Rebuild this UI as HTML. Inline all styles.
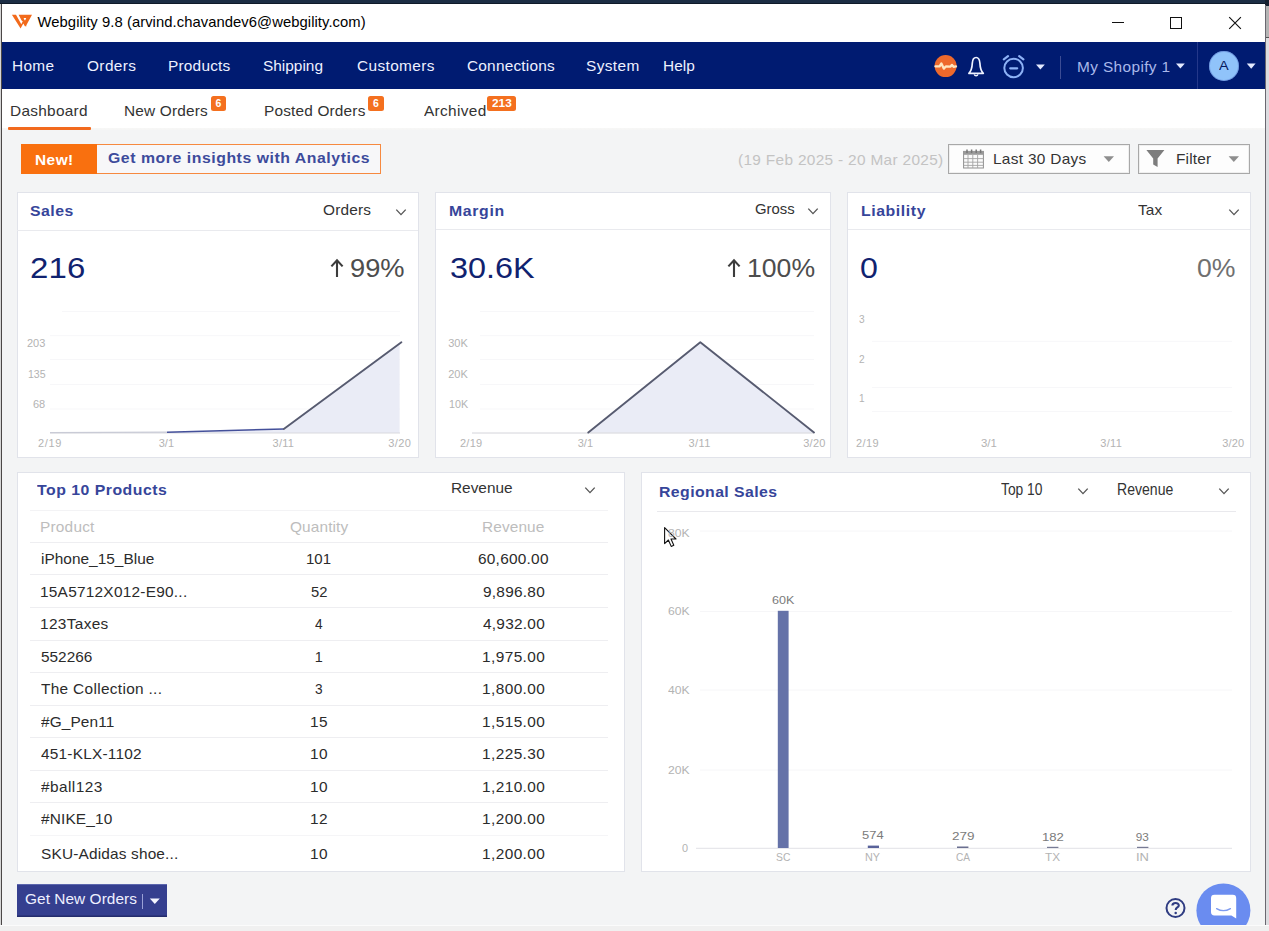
<!DOCTYPE html>
<html lang="en">
<head>
<meta charset="utf-8">
<title>Webgility 9.8</title>
<style>
html,body{margin:0;padding:0;}
body{width:1269px;height:931px;overflow:hidden;background:#f3f4f5;font-family:"Liberation Sans",sans-serif;}
#app{position:relative;width:1269px;height:931px;overflow:hidden;background:#f3f4f5;}
#app div,#app svg{position:absolute;}
.t{white-space:nowrap;margin:0;padding:0;}
.card{background:#fff;border:1px solid #e1e3ea;box-sizing:border-box;}
.hl{height:1px;background:#eeeef1;}
.badge{background:#f4701f;border-radius:2.5px;}
.btn{background:#fdfdfd;border:1.3px solid #a8a8a8;box-sizing:border-box;box-shadow:inset 0 0 0 1px #efefef;}
</style>
</head>
<body>
<div id="app">

<!-- ===== desktop frame behind the window ===== -->
<div style="left:0;top:0;width:1269px;height:3px;background:#1c2d44;"></div>
<div style="left:0;top:3px;width:1269px;height:1px;background:#0f1a28;"></div>
<div style="left:0;top:4px;width:1px;height:921px;background:#d6d6d6;"></div>
<div style="left:1px;top:4px;width:1px;height:921px;background:#4b4747;"></div>
<div style="left:1265px;top:0;width:4px;height:6px;background:#15202f;"></div>
<div style="left:1265px;top:5px;width:1px;height:920px;background:#6a6870;"></div>
<div style="left:1266px;top:6px;width:3px;height:31px;background:#b4b4b4;"></div>
<div style="left:1266px;top:37px;width:3px;height:1px;background:#555;"></div>
<div style="left:1266px;top:38px;width:3px;height:887px;background:#dcdce0;"></div>
<div style="left:0;top:925px;width:1269px;height:1px;background:#fbfbfb;"></div>
<div style="left:0;top:926px;width:1269px;height:5px;background:#f0f0f0;"></div>

<!-- ===== title bar ===== -->
<div style="left:2px;top:4px;width:1263px;height:38px;background:#fff;"></div>
<svg style="left:10px;top:12px;" width="24" height="20" viewBox="10 12 24 20">
  <path d="M11.9 14.7 L16 14.7 L21.3 24.2 L23.3 20.2 L26.6 26.3 L24.9 26.3 L23.3 23.4 L20.6 28.6 Z" fill="#f26a1b"/>
  <path d="M18.6 14.7 L32 14.7 L25.8 26.3 L23.4 21.8 L21.6 20.4 Z" fill="#f26a1b"/>
  <path d="M23.6 18 L26.2 18 L25.3 20.2 L24.5 20.2 Z" fill="#fff"/>
</svg>
<div style="left:1112px;top:22px;width:12px;height:1px;background:#111;"></div>
<div style="left:1170px;top:17px;width:12px;height:12px;box-sizing:border-box;border:1px solid #111;"></div>
<svg style="left:1228px;top:16px;" width="14" height="14" viewBox="0 0 14 14"><path d="M1.2 1.2 L12.9 12.9 M12.9 1.2 L1.2 12.9" stroke="#111" stroke-width="1.15" fill="none"/></svg>

<!-- ===== nav bar ===== -->
<div style="left:2px;top:42px;width:1263px;height:47px;background:#001b71;"></div>
<!-- orange pulse icon -->
<svg style="left:933px;top:54px;" width="25" height="25" viewBox="933 54 25 25">
  <circle cx="945.6" cy="66.1" r="11" fill="#ee692c"/>
  <path d="M935.4 66.3 L939.6 66.4 L941.4 63.4 L943.8 68.6 L945.8 66.5 L950.4 66.6 L952 64.9 L953.6 66.8 L956 66.4" stroke="#ffe6c0" stroke-width="2.3" fill="none" stroke-linejoin="round" stroke-linecap="round"/>
</svg>
<!-- bell -->
<svg style="left:965px;top:54px;" width="24" height="26" viewBox="965 54 24 26">
  <path d="M976.1 57.5 C973.3 57.5 972.5 60.2 972.3 63.2 C972.1 67.6 971.5 70.6 968.9 73.3 L983.3 73.3 C980.7 70.6 980.1 67.6 979.9 63.2 C979.7 60.2 978.9 57.5 976.1 57.5 Z" stroke="#eef2ff" stroke-width="1.7" fill="none" stroke-linejoin="round"/>
  <path d="M974.3 74.4 C974.8 76.3 977.4 76.3 977.9 74.4" stroke="#eef2ff" stroke-width="1.5" fill="none"/>
</svg>
<!-- alarm clock -->
<svg style="left:1000px;top:53px;" width="28" height="28" viewBox="1000 53 28 28">
  <circle cx="1013.6" cy="68" r="9.3" stroke="#8db2f6" stroke-width="2" fill="none"/>
  <path d="M1003.8 59.4 L1008 56.2 M1023.4 59.4 L1019.2 56.2" stroke="#8db2f6" stroke-width="2.2" stroke-linecap="round"/>
  <path d="M1010.2 68.3 L1017.2 68.3" stroke="#8db2f6" stroke-width="2.2" stroke-linecap="round"/>
</svg>
<svg style="left:1035px;top:63px;" width="11" height="8" viewBox="0 0 11 8"><path d="M1 1.4 L9.8 1.4 L5.4 6.6 Z" fill="#e4eaff"/></svg>
<div style="left:1060px;top:56px;width:1px;height:23px;background:#3c4c94;"></div>
<svg style="left:1175px;top:62px;" width="11" height="8" viewBox="0 0 11 8"><path d="M1 1.4 L9.8 1.4 L5.4 6.6 Z" fill="#e4eaff"/></svg>
<div style="left:1197px;top:42px;width:1px;height:47px;background:#24388a;"></div>
<div style="left:1208.5px;top:50.6px;width:30.5px;height:30.5px;border-radius:50%;background:#90c3fa;box-shadow:inset 0 0 0 1px rgba(80,110,200,.45);"></div>
<svg style="left:1246px;top:62px;" width="11" height="8" viewBox="0 0 11 8"><path d="M0.8 1.4 L9.6 1.4 L5.2 6.8 Z" fill="#e4eaff"/></svg>

<!-- ===== tab bar ===== -->
<div style="left:2px;top:89px;width:1263px;height:41px;background:linear-gradient(#fff 0,#fff 38.6px,#f7f7f6 39.4px,#f5f5f5 41px);"></div>
<div style="left:8px;top:127px;width:82.5px;height:3px;background:#f26a1e;border-radius:1px;"></div>
<div class="badge" style="left:211px;top:96px;width:15px;height:14.5px;"></div>
<div class="badge" style="left:368.3px;top:96px;width:15.4px;height:14.5px;"></div>
<div class="badge" style="left:486.5px;top:96px;width:29.8px;height:14.8px;"></div>

<!-- ===== toolbar ===== -->
<div style="left:20.75px;top:143.75px;width:360.5px;height:30.5px;box-sizing:border-box;border:1.4px solid #f6893f;background:#f7f7f9;"></div>
<div style="left:20.75px;top:143.75px;width:76px;height:30.5px;background:#f9700f;"></div>

<div class="btn" style="left:947.6px;top:143.5px;width:182.3px;height:30.6px;"></div>
<div class="btn" style="left:1137.6px;top:143.5px;width:112.6px;height:30.6px;"></div>
<!-- calendar icon -->
<svg style="left:962px;top:148px;" width="24" height="22" viewBox="962 148 24 22">
  <rect x="963.6" y="151.4" width="19.8" height="16.6" fill="#fbfbfb" stroke="#8f8f8f" stroke-width="1"/>
  <rect x="963.6" y="151.4" width="19.8" height="3.4" fill="#9a9a9a"/>
  <path d="M967 149.4 V153 M971.6 149.4 V153 M976.2 149.4 V153 M980.6 149.4 V153" stroke="#777" stroke-width="1.5"/>
  <path d="M963.6 158.6 H983.4 M963.6 162.2 H983.4 M963.6 165.4 H983.4 M968 155 V168 M972.8 155 V168 M977.6 155 V168" stroke="#a4a4a4" stroke-width="0.9"/>
</svg>
<svg style="left:1103px;top:155px;" width="12" height="8" viewBox="0 0 12 8"><path d="M0.6 1.2 L11 1.2 L5.8 7 Z" fill="#8e8e8e"/></svg>
<!-- funnel -->
<svg style="left:1145px;top:149px;" width="21" height="20" viewBox="1145 149 21 20">
  <path d="M1146.4 150 L1164.4 150 L1157.6 158.6 L1157.6 167 L1153.2 164.4 L1153.2 158.6 Z" fill="#7d7d7d"/>
</svg>
<svg style="left:1227.5px;top:155px;" width="12" height="8" viewBox="0 0 12 8"><path d="M0.6 1.2 L11 1.2 L5.8 7 Z" fill="#8e8e8e"/></svg>

<!-- ===== KPI cards ===== -->
<div class="card" style="left:16.5px;top:192px;width:402.3px;height:265.6px;"></div>
<div class="card" style="left:435.4px;top:192px;width:395.4px;height:265.6px;"></div>
<div class="card" style="left:847.4px;top:192px;width:403.2px;height:265.6px;"></div>
<div class="hl" style="left:17px;top:230px;width:401px;background:#e9eaee;"></div>
<div class="hl" style="left:436px;top:229px;width:394px;background:#e9eaee;"></div>
<div class="hl" style="left:848px;top:229px;width:402px;background:#e9eaee;"></div>

<!-- chevrons -->
<svg style="left:395px;top:208px;" width="12" height="9" viewBox="0 0 12 9"><path d="M1.3 1.6 L6 6.6 L10.7 1.6" stroke="#555" stroke-width="1.35" fill="none"/></svg>
<svg style="left:806.5px;top:207px;" width="12" height="9" viewBox="0 0 12 9"><path d="M1.3 1.6 L6 6.6 L10.7 1.6" stroke="#555" stroke-width="1.35" fill="none"/></svg>
<svg style="left:1227.8px;top:208px;" width="12" height="9" viewBox="0 0 12 9"><path d="M1.3 1.6 L6 6.6 L10.7 1.6" stroke="#555" stroke-width="1.35" fill="none"/></svg>

<!-- trend arrows -->
<svg style="left:329px;top:258px;" width="16" height="21" viewBox="329 258 16 21"><path d="M337 277 V260.4 M331.4 266.4 L337 260.2 L342.6 266.4" stroke="#3c3c3c" stroke-width="2.1" fill="none"/></svg>
<svg style="left:725.5px;top:258px;" width="16" height="21" viewBox="329 258 16 21"><path d="M337 277 V260.4 M331.4 266.4 L337 260.2 L342.6 266.4" stroke="#3c3c3c" stroke-width="2.1" fill="none"/></svg>

<!-- KPI charts -->
<svg style="left:0;top:300px;" width="1269" height="140" viewBox="0 300 1269 140">
  <g stroke="#f7f7f9" stroke-width="1">
    <path d="M62 311.5 H400 M50 335.7 H400 M50 359.5 H400 M50 384.5 H400 M50 409 H400"/>
    <path d="M480 311.5 H814 M480 335.7 H814 M480 359.5 H814 M480 384.5 H814 M480 409 H814"/>
    <path d="M872 341.3 H1232 M872 387.5 H1232 M872 411.5 H1232"/>
  </g>
  <!-- sales -->
  <path d="M50 432.6 L167 432.2 L283.8 429 L399.6 343.6 L399.6 433 L50 433 Z" fill="#eaecf6"/>
  <path d="M50 433 H400" stroke="#d9d9de" stroke-width="1"/>
  <path d="M50 432.6 L167 432.2" stroke="#c9cbd6" stroke-width="1.2" fill="none"/>
  <path d="M167 432.2 L283.8 429" stroke="#44509a" stroke-width="1.4" fill="none"/>
  <path d="M283.8 429 L401.4 342.2" stroke="#575b70" stroke-width="1.9" fill="none" stroke-linecap="round"/>
  <!-- margin -->
  <path d="M588.3 432.8 L700.3 342.2 L814 432.8 Z" fill="#eaecf6"/>
  <path d="M472 433 H814" stroke="#d4d4da" stroke-width="1"/>
  <path d="M588.3 432.6 L700.3 342.2 L814 432.4" stroke="#575b70" stroke-width="1.9" fill="none" stroke-linejoin="round" stroke-linecap="round"/>
</svg>

<!-- ===== Top 10 Products ===== -->
<div class="card" style="left:16.5px;top:472px;width:608.8px;height:400.4px;"></div>
<div class="hl" style="left:30px;top:509.5px;width:577.5px;background:#f3f3f5;"></div>
<div class="hl" style="left:30px;top:542px;width:577.5px;"></div>
<div class="hl" style="left:30px;top:574.3px;width:577.5px;"></div>
<div class="hl" style="left:30px;top:607px;width:577.5px;"></div>
<div class="hl" style="left:30px;top:639.5px;width:577.5px;"></div>
<div class="hl" style="left:30px;top:672px;width:577.5px;"></div>
<div class="hl" style="left:30px;top:704.5px;width:577.5px;"></div>
<div class="hl" style="left:30px;top:737px;width:577.5px;"></div>
<div class="hl" style="left:30px;top:769.5px;width:577.5px;"></div>
<div class="hl" style="left:30px;top:802px;width:577.5px;"></div>
<div class="hl" style="left:30px;top:834.5px;width:577.5px;background:#f5f5f7;"></div>
<svg style="left:583.8px;top:486.2px;" width="12" height="9" viewBox="0 0 12 9"><path d="M1.3 1.6 L6 6.6 L10.7 1.6" stroke="#555" stroke-width="1.35" fill="none"/></svg>

<!-- ===== Regional Sales ===== -->
<div class="card" style="left:641.4px;top:472px;width:609.2px;height:400.4px;"></div>
<div class="hl" style="left:656.5px;top:511px;width:579.5px;background:#e9e9ed;"></div>
<svg style="left:1076.6px;top:487px;" width="12" height="9" viewBox="0 0 12 9"><path d="M1.3 1.6 L6 6.6 L10.7 1.6" stroke="#555" stroke-width="1.35" fill="none"/></svg>
<svg style="left:1218.2px;top:487px;" width="12" height="9" viewBox="0 0 12 9"><path d="M1.3 1.6 L6 6.6 L10.7 1.6" stroke="#555" stroke-width="1.35" fill="none"/></svg>
<svg style="left:640px;top:520px;" width="612" height="340" viewBox="640 520 612 340">
  <path d="M700 531 H1232 M700 611.5 H1232 M700 690 H1232 M700 770 H1232" stroke="#f6f6f8" stroke-width="1"/>
  <path d="M696 848.3 H1232" stroke="#e2e2e6" stroke-width="1"/>
  <rect x="777.8" y="610.8" width="10.8" height="237.2" fill="#6572a8"/>
  <rect x="867.8" y="845.6" width="11.2" height="2.4" fill="#59629a"/>
  <rect x="957" y="846.5" width="11.4" height="1.5" fill="#6a6f90"/>
  <rect x="1047" y="846.8" width="11.4" height="1.2" fill="#777b95"/>
  <rect x="1137" y="846.8" width="11.4" height="1.2" fill="#777b95"/>
</svg>
<!-- mouse cursor -->
<svg style="left:663px;top:526px;" width="16" height="24" viewBox="0 0 16 24">
  <path d="M1.6 1.6 L1.6 17.6 L5.4 14 L8.2 20.4 L10.8 19.2 L8 13 L13 13 Z" fill="#fff" stroke="#111" stroke-width="1.1" stroke-linejoin="round"/>
</svg>

<!-- ===== footer ===== -->
<div style="left:17px;top:883.5px;width:149.8px;height:33px;background:#353f8f;box-shadow:inset 0 1px 0 #5c66ad, inset 0 -1.5px 0 #242c6c;"></div>
<div style="left:141.5px;top:893.5px;width:1px;height:15.5px;background:#9aa1d6;"></div>
<svg style="left:148.5px;top:896.6px;" width="12" height="8" viewBox="0 0 12 8"><path d="M0.8 1.4 L10.8 1.4 L5.8 7 Z" fill="#f4f5ff"/></svg>

<svg style="left:1163px;top:895px;" width="26" height="26" viewBox="1163 895 26 26">
  <circle cx="1175.5" cy="908" r="9" stroke="#2f3c82" stroke-width="2" fill="#f3f4f5"/>
  <path d="M1172.4 905.6 C1172.4 902.2 1178.8 902.2 1178.8 905.4 C1178.8 907.6 1175.7 907.4 1175.7 910" stroke="#2f3c82" stroke-width="2.1" fill="none"/>
  <circle cx="1175.7" cy="912.9" r="1.25" fill="#2f3c82"/>
</svg>
<svg style="left:1194px;top:882px;" width="60" height="43" viewBox="1194 882 60 43">
  <circle cx="1223.4" cy="910.4" r="27" fill="#6a8cf0"/>
  <path d="M1214.4 894.8 H1232.8 Q1236.2 894.8 1236.2 898.2 V918.4 L1231.4 915.4 H1214.4 Q1211 915.4 1211 912 V898.2 Q1211 894.8 1214.4 894.8 Z" fill="#fff"/>
  <path d="M1216.6 908.6 Q1223.4 912.8 1230.4 908.6" stroke="#7d9af0" stroke-width="1.3" fill="none" stroke-linecap="round"/>
</svg>

<!-- ===== text ===== -->
<div class="t" style="left:37.5px;top:13px;font-size:14.8px;line-height:19px;color:#000;letter-spacing:0.06px;">Webgility 9.8 (arvind.chavandev6@webgility.com)</div>
<div class="t" style="left:12.43px;top:56.75px;font-size:14.4px;line-height:18px;color:#eef1ff;letter-spacing:0.31px;transform:scaleX(1.0700);transform-origin:0 0;">Home</div>
<div class="t" style="left:87.25px;top:56.75px;font-size:14.4px;line-height:18px;color:#eef1ff;letter-spacing:0.36px;transform:scaleX(1.0700);transform-origin:0 0;">Orders</div>
<div class="t" style="left:167.93px;top:56.75px;font-size:14.4px;line-height:18px;color:#eef1ff;letter-spacing:0.2px;transform:scaleX(1.0700);transform-origin:0 0;">Products</div>
<div class="t" style="left:262.5px;top:56.75px;font-size:14.4px;line-height:18px;color:#eef1ff;letter-spacing:0.01px;transform:scaleX(1.0700);transform-origin:0 0;">Shipping</div>
<div class="t" style="left:356.5px;top:56.75px;font-size:14.4px;line-height:18px;color:#eef1ff;letter-spacing:0.35px;transform:scaleX(1.0700);transform-origin:0 0;">Customers</div>
<div class="t" style="left:466.5px;top:56.75px;font-size:14.4px;line-height:18px;color:#eef1ff;letter-spacing:0.2px;transform:scaleX(1.0700);transform-origin:0 0;">Connections</div>
<div class="t" style="left:586.25px;top:56.75px;font-size:14.4px;line-height:18px;color:#eef1ff;letter-spacing:0.36px;transform:scaleX(1.0700);transform-origin:0 0;">System</div>
<div class="t" style="left:662.93px;top:56.75px;font-size:14.4px;line-height:18px;color:#eef1ff;letter-spacing:0.05px;transform:scaleX(1.0700);transform-origin:0 0;">Help</div>
<div class="t" style="left:1076.68px;top:58.25px;font-size:14.4px;line-height:18px;color:#a9b8ea;letter-spacing:0.35px;transform:scaleX(1.0700);transform-origin:0 0;">My Shopify 1</div>
<div class="t" style="left:1218.8px;top:57.4px;font-size:13.2px;line-height:17px;color:#081a5c;transform:scaleX(1.1000);transform-origin:0 0;">A</div>
<div class="t" style="left:10.43px;top:101.75px;font-size:14.4px;line-height:18px;color:#333;letter-spacing:0.26px;transform:scaleX(1.0700);transform-origin:0 0;">Dashboard</div>
<div class="t" style="left:123.93px;top:101.75px;font-size:14.4px;line-height:18px;color:#333;letter-spacing:0.17px;transform:scaleX(1.0700);transform-origin:0 0;">New Orders</div>
<div class="t" style="left:263.93px;top:101.75px;font-size:14.4px;line-height:18px;color:#333;letter-spacing:0.16px;transform:scaleX(1.0700);transform-origin:0 0;">Posted Orders</div>
<div class="t" style="left:423.5px;top:101.75px;font-size:14.4px;line-height:18px;color:#333;letter-spacing:0.31px;transform:scaleX(1.0700);transform-origin:0 0;">Archived</div>
<div class="t" style="left:215.6px;top:96.3px;font-size:10.5px;line-height:14px;color:#fff;font-weight:700;">6</div>
<div class="t" style="left:373px;top:96.3px;font-size:10.5px;line-height:14px;color:#fff;font-weight:700;">6</div>
<div class="t" style="left:491.5px;top:96.3px;font-size:10.5px;line-height:14px;color:#fff;font-weight:700;transform:scaleX(1.1313);transform-origin:0 0;">213</div>
<div class="t" style="left:35px;top:150.5px;font-size:14px;line-height:18px;color:#fff;font-weight:700;letter-spacing:0.43px;transform:scaleX(1.1000);transform-origin:0 0;">New!</div>
<div class="t" style="left:107.5px;top:149px;font-size:14.4px;line-height:18px;color:#3d4b9c;font-weight:700;letter-spacing:0.49px;transform:scaleX(1.1000);transform-origin:0 0;">Get more insights with Analytics</div>
<div class="t" style="left:737.75px;top:150.6px;font-size:14.4px;line-height:18px;color:#c3c3c3;letter-spacing:0.3px;transform:scaleX(1.0700);transform-origin:0 0;">(19 Feb 2025 - 20 Mar 2025)</div>
<div class="t" style="left:992.93px;top:149.75px;font-size:14.4px;line-height:18px;color:#333;letter-spacing:0.29px;transform:scaleX(1.0700);transform-origin:0 0;">Last 30 Days</div>
<div class="t" style="left:1175.68px;top:149.75px;font-size:14.4px;line-height:18px;color:#333;letter-spacing:0.16px;transform:scaleX(1.0700);transform-origin:0 0;">Filter</div>
<div class="t" style="left:30px;top:201.5px;font-size:14.4px;line-height:18px;color:#36459a;font-weight:700;letter-spacing:0.43px;transform:scaleX(1.1000);transform-origin:0 0;">Sales</div>
<div class="t" style="left:322.5px;top:200.5px;font-size:14.4px;line-height:18px;color:#333;letter-spacing:0.17px;transform:scaleX(1.0700);transform-origin:0 0;">Orders</div>
<div class="t" style="left:449px;top:201.5px;font-size:14.4px;line-height:18px;color:#36459a;font-weight:700;letter-spacing:0.59px;transform:scaleX(1.1000);transform-origin:0 0;">Margin</div>
<div class="t" style="left:754.5px;top:199.5px;font-size:14.4px;line-height:18px;color:#333;transform:scaleX(1.0345);transform-origin:0 0;">Gross</div>
<div class="t" style="left:860.75px;top:201.5px;font-size:14.4px;line-height:18px;color:#36459a;font-weight:700;letter-spacing:0.53px;transform:scaleX(1.1000);transform-origin:0 0;">Liability</div>
<div class="t" style="left:1138px;top:200.5px;font-size:14.4px;line-height:18px;color:#333;letter-spacing:0.08px;transform:scaleX(1.0700);transform-origin:0 0;">Tax</div>
<div class="t" style="left:30.14px;top:248.75px;font-size:29.7px;line-height:38px;color:#10226f;letter-spacing:0.2px;transform:scaleX(1.1100);transform-origin:0 0;">216</div>
<div class="t" style="left:449.66px;top:248.5px;font-size:29.7px;line-height:38px;color:#10226f;transform:scaleX(1.0908);transform-origin:0 0;">30.6K</div>
<div class="t" style="left:860.42px;top:248.5px;font-size:29.7px;line-height:38px;color:#10226f;transform:scaleX(1.0833);transform-origin:0 0;">0</div>
<div class="t" style="left:349.66px;top:252px;font-size:25px;line-height:32px;color:#4d4d4d;transform:scaleX(1.0910);transform-origin:0 0;">99%</div>
<div class="t" style="left:747.44px;top:252px;font-size:25px;line-height:32px;color:#4d4d4d;transform:scaleX(1.0644);transform-origin:0 0;">100%</div>
<div class="t" style="left:1197.25px;top:252px;font-size:25px;line-height:32px;color:#707070;transform:scaleX(1.0653);transform-origin:0 0;">0%</div>
<div class="t" style="left:27px;top:335.71px;font-size:11px;line-height:14px;color:#b3b3b3;">203</div>
<div class="t" style="left:27.5px;top:367.46px;font-size:11px;line-height:14px;color:#b3b3b3;transform:scaleX(0.9597);transform-origin:0 0;">135</div>
<div class="t" style="left:33px;top:397.46px;font-size:11px;line-height:14px;color:#b3b3b3;">68</div>
<div class="t" style="left:38px;top:436.21px;font-size:11px;line-height:14px;color:#b3b3b3;letter-spacing:0.65px;">2/19</div>
<div class="t" style="left:158.75px;top:436.21px;font-size:11px;line-height:14px;color:#b3b3b3;">3/1</div>
<div class="t" style="left:272.5px;top:436.21px;font-size:11px;line-height:14px;color:#b3b3b3;letter-spacing:0.26px;">3/11</div>
<div class="t" style="left:388.25px;top:436.21px;font-size:11px;line-height:14px;color:#b3b3b3;letter-spacing:0.4px;">3/20</div>
<div class="t" style="left:448.25px;top:335.71px;font-size:11px;line-height:14px;color:#b3b3b3;">30K</div>
<div class="t" style="left:448.25px;top:367.46px;font-size:11px;line-height:14px;color:#b3b3b3;">20K</div>
<div class="t" style="left:449px;top:397.46px;font-size:11px;line-height:14px;color:#b3b3b3;transform:scaleX(0.9760);transform-origin:0 0;">10K</div>
<div class="t" style="left:460px;top:436.21px;font-size:11px;line-height:14px;color:#b3b3b3;letter-spacing:0.24px;">2/19</div>
<div class="t" style="left:577.75px;top:436.21px;font-size:11px;line-height:14px;color:#b3b3b3;">3/1</div>
<div class="t" style="left:688.5px;top:436.21px;font-size:11px;line-height:14px;color:#b3b3b3;letter-spacing:0.42px;">3/11</div>
<div class="t" style="left:803.25px;top:436.21px;font-size:11px;line-height:14px;color:#b3b3b3;letter-spacing:0.24px;">3/20</div>
<div class="t" style="left:859.37px;top:311.96px;font-size:11px;line-height:14px;color:#b3b3b3;transform:scaleX(0.9200);transform-origin:0 0;">3</div>
<div class="t" style="left:859.37px;top:352.46px;font-size:11px;line-height:14px;color:#b3b3b3;transform:scaleX(0.9200);transform-origin:0 0;">2</div>
<div class="t" style="left:859.24px;top:391.21px;font-size:11px;line-height:14px;color:#b3b3b3;transform:scaleX(0.9200);transform-origin:0 0;">1</div>
<div class="t" style="left:856px;top:436.21px;font-size:11px;line-height:14px;color:#b3b3b3;letter-spacing:0.4px;">2/19</div>
<div class="t" style="left:981px;top:436.21px;font-size:11px;line-height:14px;color:#b3b3b3;transform:scaleX(1.0380);transform-origin:0 0;">3/1</div>
<div class="t" style="left:1100.25px;top:436.21px;font-size:11px;line-height:14px;color:#b3b3b3;letter-spacing:0.34px;">3/11</div>
<div class="t" style="left:1222.25px;top:436.21px;font-size:11px;line-height:14px;color:#b3b3b3;letter-spacing:0.15px;">3/20</div>
<div class="t" style="left:37px;top:480.5px;font-size:14.4px;line-height:18px;color:#36459a;font-weight:700;letter-spacing:0.45px;transform:scaleX(1.1000);transform-origin:0 0;">Top 10 Products</div>
<div class="t" style="left:450.93px;top:478.75px;font-size:14.4px;line-height:18px;color:#333;transform:scaleX(1.0689);transform-origin:0 0;">Revenue</div>
<div class="t" style="left:40.18px;top:517.5px;font-size:14.4px;line-height:18px;color:#bdbdbd;letter-spacing:0.2px;transform:scaleX(1.0700);transform-origin:0 0;">Product</div>
<div class="t" style="left:290px;top:517.5px;font-size:14.4px;line-height:18px;color:#bdbdbd;letter-spacing:0.11px;transform:scaleX(1.0700);transform-origin:0 0;">Quantity</div>
<div class="t" style="left:482.18px;top:517.5px;font-size:14.4px;line-height:18px;color:#bdbdbd;letter-spacing:0.11px;transform:scaleX(1.0700);transform-origin:0 0;">Revenue</div>
<div class="t" style="left:41.25px;top:550px;font-size:14.4px;line-height:18px;color:#2b2b2b;letter-spacing:0.02px;transform:scaleX(1.0700);transform-origin:0 0;">iPhone_15_Blue</div>
<div class="t" style="left:306.16px;top:550px;font-size:14.4px;line-height:18px;color:#2b2b2b;transform:scaleX(1.0432);transform-origin:0 0;">101</div>
<div class="t" style="left:477.75px;top:550px;font-size:14.4px;line-height:18px;color:#2b2b2b;letter-spacing:0.23px;transform:scaleX(1.0700);transform-origin:0 0;">60,600.00</div>
<div class="t" style="left:40.18px;top:582.5px;font-size:14.4px;line-height:18px;color:#2b2b2b;letter-spacing:0.23px;transform:scaleX(1.0700);transform-origin:0 0;">15A5712X012-E90...</div>
<div class="t" style="left:311px;top:582.5px;font-size:14.4px;line-height:18px;color:#2b2b2b;transform:scaleX(1.0248);transform-origin:0 0;">52</div>
<div class="t" style="left:482.75px;top:582.5px;font-size:14.4px;line-height:18px;color:#2b2b2b;letter-spacing:0.24px;transform:scaleX(1.0700);transform-origin:0 0;">9,896.80</div>
<div class="t" style="left:40.18px;top:615px;font-size:14.4px;line-height:18px;color:#2b2b2b;letter-spacing:0.32px;transform:scaleX(1.0700);transform-origin:0 0;">123Taxes</div>
<div class="t" style="left:315.4px;top:615px;font-size:14.4px;line-height:18px;color:#2b2b2b;transform:scaleX(0.9500);transform-origin:0 0;">4</div>
<div class="t" style="left:482.75px;top:615px;font-size:14.4px;line-height:18px;color:#2b2b2b;letter-spacing:0.24px;transform:scaleX(1.0700);transform-origin:0 0;">4,932.00</div>
<div class="t" style="left:41.25px;top:647.5px;font-size:14.4px;line-height:18px;color:#2b2b2b;transform:scaleX(1.0673);transform-origin:0 0;">552266</div>
<div class="t" style="left:314.7px;top:647.5px;font-size:14.4px;line-height:18px;color:#2b2b2b;">1</div>
<div class="t" style="left:481.68px;top:647.5px;font-size:14.4px;line-height:18px;color:#2b2b2b;letter-spacing:0.39px;transform:scaleX(1.0700);transform-origin:0 0;">1,975.00</div>
<div class="t" style="left:41.25px;top:680px;font-size:14.4px;line-height:18px;color:#2b2b2b;letter-spacing:0.3px;transform:scaleX(1.0700);transform-origin:0 0;">The Collection ...</div>
<div class="t" style="left:315.4px;top:680px;font-size:14.4px;line-height:18px;color:#2b2b2b;transform:scaleX(0.9500);transform-origin:0 0;">3</div>
<div class="t" style="left:481.68px;top:680px;font-size:14.4px;line-height:18px;color:#2b2b2b;letter-spacing:0.39px;transform:scaleX(1.0700);transform-origin:0 0;">1,800.00</div>
<div class="t" style="left:41.25px;top:712.5px;font-size:14.4px;line-height:18px;color:#2b2b2b;letter-spacing:0.1px;transform:scaleX(1.0700);transform-origin:0 0;">#G_Pen11</div>
<div class="t" style="left:309.93px;top:712.5px;font-size:14.4px;line-height:18px;color:#2b2b2b;letter-spacing:0.32px;transform:scaleX(1.0700);transform-origin:0 0;">15</div>
<div class="t" style="left:481.68px;top:712.5px;font-size:14.4px;line-height:18px;color:#2b2b2b;letter-spacing:0.39px;transform:scaleX(1.0700);transform-origin:0 0;">1,515.00</div>
<div class="t" style="left:41.25px;top:745px;font-size:14.4px;line-height:18px;color:#2b2b2b;letter-spacing:0.2px;transform:scaleX(1.0700);transform-origin:0 0;">451-KLX-1102</div>
<div class="t" style="left:309.93px;top:745px;font-size:14.4px;line-height:18px;color:#2b2b2b;letter-spacing:0.32px;transform:scaleX(1.0700);transform-origin:0 0;">10</div>
<div class="t" style="left:481.68px;top:745px;font-size:14.4px;line-height:18px;color:#2b2b2b;letter-spacing:0.39px;transform:scaleX(1.0700);transform-origin:0 0;">1,225.30</div>
<div class="t" style="left:41.25px;top:777.5px;font-size:14.4px;line-height:18px;color:#2b2b2b;letter-spacing:0.4px;transform:scaleX(1.0700);transform-origin:0 0;">#ball123</div>
<div class="t" style="left:309.93px;top:777.5px;font-size:14.4px;line-height:18px;color:#2b2b2b;letter-spacing:0.32px;transform:scaleX(1.0700);transform-origin:0 0;">10</div>
<div class="t" style="left:481.68px;top:777.5px;font-size:14.4px;line-height:18px;color:#2b2b2b;letter-spacing:0.39px;transform:scaleX(1.0700);transform-origin:0 0;">1,210.00</div>
<div class="t" style="left:41.25px;top:810px;font-size:14.4px;line-height:18px;color:#2b2b2b;letter-spacing:0.14px;transform:scaleX(1.0700);transform-origin:0 0;">#NIKE_10</div>
<div class="t" style="left:309.93px;top:810px;font-size:14.4px;line-height:18px;color:#2b2b2b;letter-spacing:0.32px;transform:scaleX(1.0700);transform-origin:0 0;">12</div>
<div class="t" style="left:481.68px;top:810px;font-size:14.4px;line-height:18px;color:#2b2b2b;letter-spacing:0.39px;transform:scaleX(1.0700);transform-origin:0 0;">1,200.00</div>
<div class="t" style="left:41.25px;top:845.25px;font-size:14.4px;line-height:18px;color:#2b2b2b;letter-spacing:0.16px;transform:scaleX(1.0700);transform-origin:0 0;">SKU-Adidas shoe...</div>
<div class="t" style="left:309.93px;top:845.25px;font-size:14.4px;line-height:18px;color:#2b2b2b;letter-spacing:0.32px;transform:scaleX(1.0700);transform-origin:0 0;">10</div>
<div class="t" style="left:481.68px;top:845.25px;font-size:14.4px;line-height:18px;color:#2b2b2b;letter-spacing:0.39px;transform:scaleX(1.0700);transform-origin:0 0;">1,200.00</div>
<div class="t" style="left:659px;top:482.5px;font-size:14.4px;line-height:18px;color:#36459a;font-weight:700;letter-spacing:0.38px;transform:scaleX(1.1000);transform-origin:0 0;">Regional Sales</div>
<div class="t" style="left:1000.5px;top:480.25px;font-size:15.6px;line-height:20px;color:#333;transform:scaleX(0.8855);transform-origin:0 0;">Top 10</div>
<div class="t" style="left:1117.1px;top:480.25px;font-size:15.6px;line-height:20px;color:#333;transform:scaleX(0.9013);transform-origin:0 0;">Revenue</div>
<div class="t" style="left:667.75px;top:525.5px;font-size:11.8px;line-height:15px;color:#b3b3b3;transform:scaleX(1.0297);transform-origin:0 0;">80K</div>
<div class="t" style="left:667.75px;top:604.25px;font-size:11.8px;line-height:15px;color:#b3b3b3;transform:scaleX(1.0297);transform-origin:0 0;">60K</div>
<div class="t" style="left:667.75px;top:683px;font-size:11.8px;line-height:15px;color:#b3b3b3;transform:scaleX(1.0297);transform-origin:0 0;">40K</div>
<div class="t" style="left:667.75px;top:763.25px;font-size:11.8px;line-height:15px;color:#b3b3b3;transform:scaleX(1.0297);transform-origin:0 0;">20K</div>
<div class="t" style="left:681.73px;top:841.25px;font-size:11.8px;line-height:15px;color:#b3b3b3;transform:scaleX(0.9200);transform-origin:0 0;">0</div>
<div class="t" style="left:771.5px;top:593px;font-size:11.8px;line-height:15px;color:#7b7b7b;transform:scaleX(1.0653);transform-origin:0 0;">60K</div>
<div class="t" style="left:861.75px;top:827.75px;font-size:11.8px;line-height:15px;color:#7b7b7b;transform:scaleX(1.1008);transform-origin:0 0;">574</div>
<div class="t" style="left:951.6px;top:828.65px;font-size:11.8px;line-height:15px;color:#7b7b7b;transform:scaleX(1.1453);transform-origin:0 0;">279</div>
<div class="t" style="left:1042.1px;top:830.05px;font-size:11.8px;line-height:15px;color:#7b7b7b;transform:scaleX(1.1087);transform-origin:0 0;">182</div>
<div class="t" style="left:1135.7px;top:830.05px;font-size:11.8px;line-height:15px;color:#7b7b7b;">93</div>
<div class="t" style="left:775.5px;top:850.4px;font-size:11.8px;line-height:15px;color:#b3b3b3;transform:scaleX(0.8774);transform-origin:0 0;">SC</div>
<div class="t" style="left:864.6px;top:850.4px;font-size:11.8px;line-height:15px;color:#b3b3b3;transform:scaleX(0.9141);transform-origin:0 0;">NY</div>
<div class="t" style="left:955.8px;top:850.4px;font-size:11.8px;line-height:15px;color:#b3b3b3;transform:scaleX(0.8596);transform-origin:0 0;">CA</div>
<div class="t" style="left:1045px;top:850.4px;font-size:11.8px;line-height:15px;color:#b3b3b3;">TX</div>
<div class="t" style="left:1135.6px;top:850.4px;font-size:11.8px;line-height:15px;color:#b3b3b3;transform:scaleX(1.0995);transform-origin:0 0;">IN</div>
<div class="t" style="left:25px;top:890px;font-size:14.4px;line-height:18px;color:#eef0ff;letter-spacing:0.05px;transform:scaleX(1.0700);transform-origin:0 0;">Get New Orders</div>

</div>
</body>
</html>
